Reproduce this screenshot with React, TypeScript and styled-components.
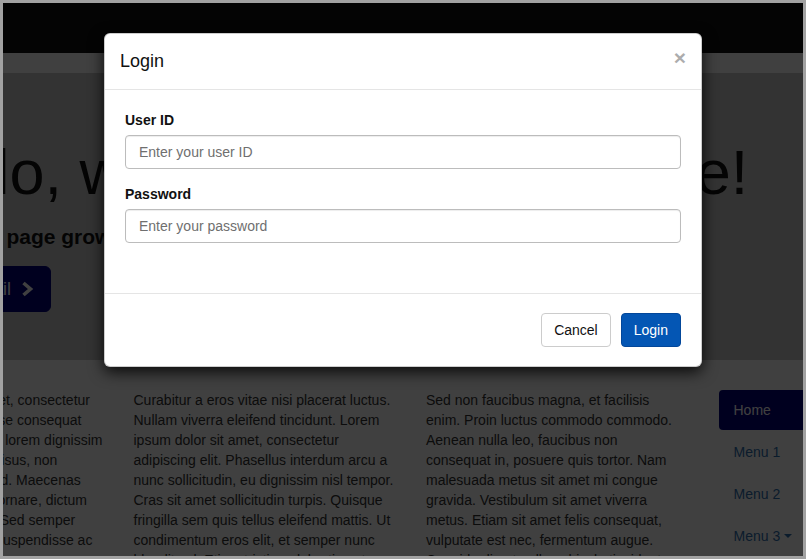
import React from "react";
import styled, { createGlobalStyle } from "styled-components";

const GlobalStyle = createGlobalStyle`
  html, body {
    margin: 0;
    padding: 0;
    background: #ffffff;
  }
  * {
    box-sizing: border-box;
  }
`;

const colors = {
  frame: "#a2a2a2",
  navbar: "#111111",
  hero: "#cccccc",
  text: "#333333",
  navy: "#00007c",
  link: "#2f6fb0",
  primary: "#0456b4",
  primaryBorder: "#03479a",
  line: "#e5e5e5",
  inputBorder: "#bcbcbc",
};

const Frame = styled.div`
  position: relative;
  width: 806px;
  height: 559px;
  border: 3px solid ${colors.frame};
  overflow: hidden;
  background: #ffffff;
  font-family: "Liberation Sans", Arial, sans-serif;
  color: ${colors.text};
`;

const Navbar = styled.div`
  height: 50px;
  background: ${colors.navbar};
`;

// the page is scrolled sideways, so the 1140px container starts left of the view
const Container = styled.div`
  width: 1140px;
  margin-left: -162px;
  padding-top: 20px;
`;

const Jumbotron = styled.div`
  background: ${colors.hero};
  border-radius: 6px;
  padding: 65px 60px 48px;
`;

const HeroTitle = styled.h1`
  margin: 0 0 15px;
  font-size: 63px;
  line-height: 1.1;
  font-weight: 400;
  color: #111111;
  white-space: nowrap;
`;

const HeroLead = styled.p`
  margin: 0 0 14px;
  font-size: 21px;
  line-height: 30px;
  font-weight: 700;
  color: #111111;
`;

const HeroButton = styled.a`
  display: inline-flex;
  align-items: center;
  gap: 10px;
  height: 46px;
  padding: 10px 16px;
  font-size: 18px;
  line-height: 24px;
  border-radius: 6px;
  background: ${colors.navy};
  border: 1px solid ${colors.navy};
  color: #ffffff;
`;

const Columns = styled.div`
  display: grid;
  grid-template-columns: repeat(4, 1fr);
  column-gap: 30px;
  padding-top: 30px;
`;

const Para = styled.p`
  margin: 0;
  font-size: 14px;
  line-height: 20px;
  color: ${colors.text};
  white-space: pre-line;
`;

const Pills = styled.ul`
  list-style: none;
  margin: 0;
  padding: 0;
  display: flex;
  flex-direction: column;
  gap: 2px;
`;

const Pill = styled.li<{ active?: boolean }>`
  display: flex;
  align-items: center;
  padding: 10px 15px;
  font-size: 14px;
  line-height: 20px;
  border-radius: 4px;
  background: ${(p) => (p.active ? colors.navy : "transparent")};
  color: ${(p) => (p.active ? "#ffffff" : colors.link)};
`;

const Caret = styled.span`
  display: inline-block;
  margin-left: 4px;
  width: 0;
  height: 0;
  border-top: 4px solid currentColor;
  border-left: 4px solid transparent;
  border-right: 4px solid transparent;
`;

const Backdrop = styled.div`
  position: absolute;
  inset: 0;
  background: rgba(0, 0, 0, 0.75);
`;

const ModalLayer = styled.div`
  position: absolute;
  inset: 0;
`;

const Dialog = styled.div`
  width: 598px;
  margin: 30px auto 0;
  background: #ffffff;
  border: 1px solid rgba(0, 0, 0, 0.2);
  border-radius: 6px;
  box-shadow: 0 5px 15px rgba(0, 0, 0, 0.85);
`;

const Header = styled.div`
  display: flex;
  align-items: center;
  justify-content: space-between;
  padding: 15px;
  border-bottom: 1px solid ${colors.line};
`;

const Title = styled.h4`
  margin: 0;
  font-size: 18px;
  line-height: 25px;
  font-weight: 400;
  color: #111111;
`;

const Close = styled.button`
  border: 0;
  background: none;
  padding: 0;
  margin-top: -9px;
  font-family: "Liberation Sans", Arial, sans-serif;
  font-size: 21px;
  font-weight: 700;
  line-height: 1;
  color: #000000;
  opacity: 0.32;
`;

const Body = styled.form`
  padding: 20px 20px 35px;
`;

const FormGroup = styled.div`
  margin-bottom: 15px;
`;

const Label = styled.label`
  display: block;
  margin-bottom: 5px;
  font-size: 14px;
  line-height: 20px;
  font-weight: 700;
  color: #111111;
`;

const Input = styled.input`
  display: block;
  width: 100%;
  height: 34px;
  padding: 6px 13px;
  font-family: "Liberation Sans", Arial, sans-serif;
  font-size: 14px;
  color: #555555;
  border: 1px solid ${colors.inputBorder};
  border-radius: 4px;
  box-shadow: inset 0 1px 1px rgba(0, 0, 0, 0.075);
  outline: none;

  &::placeholder {
    color: #6f6f6f;
  }
`;

const Footer = styled.div`
  display: flex;
  justify-content: flex-end;
  gap: 10px;
  padding: 19px 20px;
  border-top: 1px solid ${colors.line};
`;

const Button = styled.button<{ primary?: boolean }>`
  height: 34px;
  padding: 6px 12px;
  font-family: "Liberation Sans", Arial, sans-serif;
  font-size: 14px;
  line-height: 20px;
  border-radius: 4px;
  border: 1px solid ${(p) => (p.primary ? colors.primaryBorder : "#cccccc")};
  background: ${(p) => (p.primary ? colors.primary : "#ffffff")};
  color: ${(p) => (p.primary ? "#ffffff" : "#111111")};
`;

const ChevronRight = () => (
  <svg width="13" height="16" viewBox="0 0 13 16" aria-hidden="true">
    <path
      d="M2.5 2 L9.5 8 L2.5 14"
      fill="none"
      stroke="currentColor"
      strokeWidth="3.6"
    />
  </svg>
);

// line breaks follow the wrapping of the original page
const columnText = [
  [
    "Lorem ipsum dolor sit amet, consectetur",
    "adipiscing elit. Suspendisse consequat",
    "nulla. Integer sed nunc ac lorem dignissim",
    "ornare vivamus tincidunt risus, non",
    "pellentesque lacus nisl sed. Maecenas",
    "vestibulum ante nisi quis ornare, dictum",
    "mauris vel lectus tempor. Sed semper",
    "feugiat nunc nec metus. Suspendisse ac",
    "pretium nisl, at tincidunt lorem.",
  ],
  [
    "Curabitur a eros vitae nisi placerat luctus.",
    "Nullam viverra eleifend tincidunt. Lorem",
    "ipsum dolor sit amet, consectetur",
    "adipiscing elit. Phasellus interdum arcu a",
    "nunc sollicitudin, eu dignissim nisl tempor.",
    "Cras sit amet sollicitudin turpis. Quisque",
    "fringilla sem quis tellus eleifend mattis. Ut",
    "condimentum eros elit, et semper nunc",
    "blandit vel. Etiam tristique lobortis ante.",
  ],
  [
    "Sed non faucibus magna, et facilisis",
    "enim. Proin luctus commodo commodo.",
    "Aenean nulla leo, faucibus non",
    "consequat in, posuere quis tortor. Nam",
    "malesuada metus sit amet mi congue",
    "gravida. Vestibulum sit amet viverra",
    "metus. Etiam sit amet felis consequat,",
    "vulputate est nec, fermentum augue.",
    "Cras id odio et nulla vehicula tincidunt.",
  ],
];

const menu = ["Home", "Menu 1", "Menu 2", "Menu 3"];

const App = () => {
  return (
    <>
      <GlobalStyle />
      <Frame>
        <Navbar />
        <Container>
          <Jumbotron>
            <HeroTitle>Hello, welcome to my website!</HeroTitle>
            <HeroLead>Watch the page grow as you add more content.</HeroLead>
            <HeroButton>
              Show detail
              <ChevronRight />
            </HeroButton>
          </Jumbotron>
          <Columns>
            {columnText.map((lines, i) => (
              <Para key={i}>{lines.join("\n")}</Para>
            ))}
            <Pills>
              {menu.map((m, i) => (
                <Pill key={m} active={i === 0}>
                  {m}
                  {i === 3 && <Caret />}
                </Pill>
              ))}
            </Pills>
          </Columns>
        </Container>

        <Backdrop />
        <ModalLayer>
          <Dialog>
            <Header>
              <Title>Login</Title>
              <Close type="button">×</Close>
            </Header>
            <Body>
              <FormGroup>
                <Label htmlFor="userId">User ID</Label>
                <Input id="userId" placeholder="Enter your user ID" />
              </FormGroup>
              <FormGroup>
                <Label htmlFor="password">Password</Label>
                <Input
                  id="password"
                  type="password"
                  placeholder="Enter your password"
                />
              </FormGroup>
            </Body>
            <Footer>
              <Button type="button">Cancel</Button>
              <Button type="button" primary>
                Login
              </Button>
            </Footer>
          </Dialog>
        </ModalLayer>
      </Frame>
    </>
  );
};

export default App;
